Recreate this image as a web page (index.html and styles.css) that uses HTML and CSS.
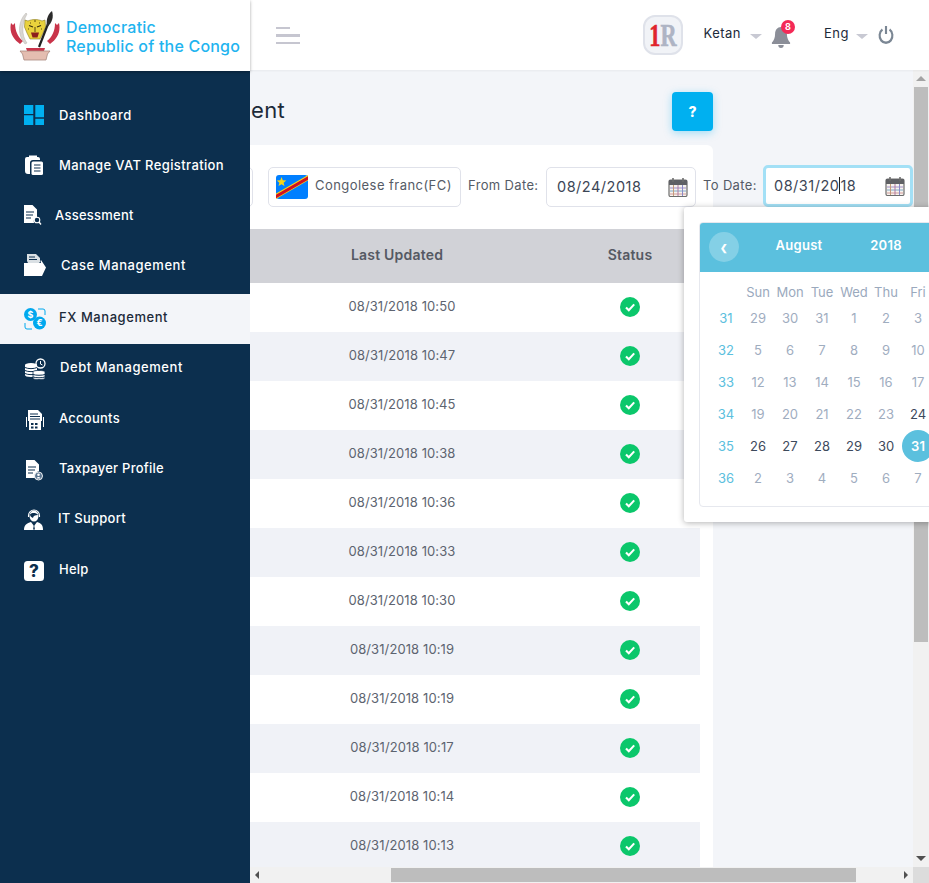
FILE: index.html
```html
<!DOCTYPE html>
<html lang="en">
<head>
<meta charset="utf-8">
<title>FX Management</title>
<link rel="stylesheet" href="styles.css">
</head>
<body>
<svg class="defs" width="0" height="0" aria-hidden="true">
  <symbol id="check" viewBox="0 0 20 20">
    <circle cx="10" cy="10" r="10" fill="#0bc76b"/>
    <path d="M6 10.400l2.800 2.800 5.400-5.800" fill="none" stroke="#fff" stroke-width="2.100"/>
  </symbol>
  <symbol id="cal" viewBox="0 0 20 20">
    <rect x="1" y="3" width="18" height="16.500" rx="1.500" fill="#f7f3ee" stroke="#6d6d6d" stroke-width="1.200"/>
    <rect x="1" y="3" width="18" height="5" fill="#5f6064"/>
    <path d="M5 1v4M15 1v4" stroke="#6d6d6d" stroke-width="1.600"/>
    <path d="M2 11h16" stroke="#a08fc8" stroke-width="1"/>
    <path d="M2 14h16" stroke="#7fa8c8" stroke-width="1"/>
    <path d="M2 17h16" stroke="#d09a9a" stroke-width="1"/>
    <path d="M5.500 8v11" stroke="#c49a7a" stroke-width="1"/>
    <path d="M10 8v11" stroke="#b07aa0" stroke-width="1"/>
    <path d="M14.500 8v11" stroke="#8a8ac8" stroke-width="1"/>
  </symbol>
</svg>
<div class="app">
  <aside class="sidebar">
    <div class="brand">
      <svg class="emblem" viewBox="0 0 50 50" width="50" height="50" aria-hidden="true">
        <path d="M1 12c-2 9 2 16 9 21l3-3C8 26 5 20 5 12L3 14z" fill="#c9344a"/>
        <path d="M49 12c2 9-2 16-9 21l-3-3c5-4 8-10 8-18l2 2z" fill="#c9344a"/>
        <path d="M16 2C8 10 7 24 15 33l2-1C11 24 12 12 17 3z" fill="#d9d6d2" stroke="#a9a6a2" stroke-width=".4"/>
        <path d="M15 9l3 1c4-2 10-2 14 0l3-1 .5 7-2.500 6-3 6h-10l-3-6-2.500-6z" fill="#e9d23c" stroke="#8a7a20" stroke-width=".6"/>
        <path d="M19 14.500l4 1.500M31 14.500l-4 1.500" stroke="#3a3010" stroke-width="1.300"/>
        <path d="M25 16v5M20 12h1M29 12h1M18 18h1M31 18h1M24 10h2" stroke="#5a4a10" stroke-width="1"/>
        <path d="M21 21.500h8l-1.500 5h-5z" fill="#8c1f1c"/>
        <path d="M29 36L38 13" stroke="#222" stroke-width="2.200"/>
        <path d="M42 0c2 6 0 12-5 16-1-6 0-12 5-16z" fill="#2b2b2b"/>
        <path d="M16 37h19l-1 3H17z" fill="#c9344a"/>
        <path d="M10 40h30l-2.500 3-1.500 6H14l-1.500-6z" fill="#e4bdb0" stroke="#a98a80" stroke-width=".8"/>
      </svg>
      <div class="brand-name">Democratic<br>Republic of the Congo</div>
    </div>
    <nav class="nav">
      <a class="nav-item">
        <svg class="nav-icon" viewBox="0 0 22 22" aria-hidden="true"><path fill="#00b0f0" d="M0 1h9.300v9H0zM0 11.300h9.300V21H0zM11.300 1H20v12.300h-8.700zM11.300 14.700H20V21h-8.700z"/></svg>
        <span class="nav-label ls-wide">Dashboard</span>
      </a>
      <a class="nav-item">
        <svg class="nav-icon" viewBox="0 0 22 22" aria-hidden="true"><path fill="#fff" d="M3 3h2V1.500h8V3h1a2 2 0 0 1 2 2v1H9a3 3 0 0 0-3 3v11H4a3 3 0 0 1-3-3V5a2 2 0 0 1 2-2z"/><rect x="7.500" y="7.500" width="11.500" height="13.500" rx="1.500" fill="#fff"/><path d="M10 11h6.500M10 14h6.500M10 17h6.500" stroke="#0d2f4f" stroke-width="1.200"/></svg>
        <span class="nav-label ls-mid">Manage VAT Registration</span>
      </a>
      <a class="nav-item">
        <svg class="nav-icon" viewBox="0 0 22 22" aria-hidden="true"><path fill="#fff" d="M0 1h8.500l4.500 4.500V13a5 5 0 0 0-3 6H0z"/><path d="M2 8h8M2 11h7M2 14h5" stroke="#0d2f4f" stroke-width="1.100"/><circle cx="13" cy="16" r="2.800" fill="none" stroke="#fff" stroke-width="1.100"/><path d="M15 18l2 2.500" stroke="#fff" stroke-width="1.300"/></svg>
        <span class="nav-label nav-label-assess">Assessment</span>
      </a>
      <a class="nav-item">
        <svg class="nav-icon" viewBox="0 0 22 22" aria-hidden="true"><path fill="#fff" d="M3 7V0h9l4 4v4l-1 1H4z" opacity=".85"/><path d="M5 3h6M5 5.500h8" stroke="#0d2f4f" stroke-width="1"/><path fill="#fff" d="M0 9h17l-.5-2 .5-1 5 7.500-4 8.500H0z"/></svg>
        <span class="nav-label nav-label-case ls-wide">Case Management</span>
      </a>
      <div class="nav-lower">
        <a class="nav-item is-active">
          <svg class="nav-icon" viewBox="0 0 22 22" aria-hidden="true"><circle cx="6.500" cy="6.500" r="6.500" fill="#00a8ee"/><circle cx="15.500" cy="15" r="6.500" fill="#00a8ee"/><text x="6.500" y="9.800" class="fx-glyph">$</text><text x="15.500" y="18.300" class="fx-glyph">€</text><path d="M14 1h5a2 2 0 0 1 2 2v4M8 21H3a2 2 0 0 1-2-2v-4" fill="none" stroke="#00a8ee" stroke-width="1"/></svg>
          <span class="nav-label ls-wide">FX Management</span>
        </a>
        <a class="nav-item">
          <svg class="nav-icon" viewBox="0 0 22 22" aria-hidden="true"><path fill="#fff" d="M1 7c0-1 2-2 6-2s6 1 6 2v10c0 1-2 2-6 2s-6-1-6-2z"/><path d="M1 9.500c3 1.500 9 1.500 12 0M1 12.500c3 1.500 9 1.500 12 0M1 15.500c3 1.500 9 1.500 12 0" fill="none" stroke="#0d2f4f" stroke-width="1"/><path fill="#fff" d="M9 14c0-1 2-1.500 6-1.500s6 .5 6 1.500v6c0 1-2 1.500-6 1.500s-6-.5-6-1.500z" stroke="#0d2f4f" stroke-width=".8"/><path d="M9 16.500c3 1 9 1 12 0M9 19c3 1 9 1 12 0" fill="none" stroke="#0d2f4f" stroke-width="1"/><circle cx="16.500" cy="5.500" r="4.500" fill="none" stroke="#fff" stroke-width="1.300"/><path d="M16.500 3v3l2 1" fill="none" stroke="#fff" stroke-width="1"/></svg>
          <span class="nav-label nav-label-debt ls-wide">Debt Management</span>
        </a>
        <a class="nav-item">
          <svg class="nav-icon" viewBox="0 0 22 22" aria-hidden="true"><path fill="#fff" d="M4 1h10l4 4v7H4zM2 8h1v10H2zM19 8h1v10h-1z"/><path d="M6 5h8M6 7.500h10M6 10h10" stroke="#0d2f4f" stroke-width="1"/><rect x="5" y="11.500" width="12" height="9.500" fill="#fff"/><path d="M7 14h2.500v2H7zM11 14h2.500v2H11zM7 17.500h2.500v2H7zM11 17.500h2.500v2H11z" fill="#0d2f4f"/></svg>
          <span class="nav-label">Accounts</span>
        </a>
        <a class="nav-item">
          <svg class="nav-icon" viewBox="0 0 22 22" aria-hidden="true"><path fill="#fff" d="M2 1h8.500L15 5.500V12a5 5 0 0 0-3.500 7H2z"/><path d="M4 8h8M4 11h7M4 14h5" stroke="#0d2f4f" stroke-width="1.100"/><circle cx="14.500" cy="17" r="4" fill="#5a7590" stroke="#fff" stroke-width=".9"/><circle cx="14.500" cy="15.800" r="1.300" fill="#fff"/><path d="M12.500 19.500c.5-2 3.500-2 4 0z" fill="#fff"/></svg>
          <span class="nav-label">Taxpayer Profile</span>
        </a>
        <a class="nav-item">
          <svg class="nav-icon" viewBox="0 0 22 22" aria-hidden="true"><ellipse cx="10" cy="7" rx="4.500" ry="5.500" fill="#fff"/><path d="M4.500 8V6.500a5.500 5.500 0 0 1 11 0V8" fill="none" stroke="#fff" stroke-width="1.100"/><path d="M6 5.500c2-2 6-2 8 .5-3 0-5 1-5 3-2-1-3-2-3-3.500z" fill="#0d2f4f"/><path fill="#fff" d="M0 21c0-5 3-7 7-8l3 4 3-4c4 1 6 3 6 8z"/><path d="M10 15.500l-1 5h2z" fill="#0d2f4f"/></svg>
          <span class="nav-label nav-label-it">IT Support</span>
        </a>
        <a class="nav-item">
          <svg class="nav-icon" viewBox="0 0 22 22" aria-hidden="true"><rect y="1" width="20" height="20" rx="3.500" fill="#fff"/><text x="10" y="17" class="help-glyph">?</text></svg>
          <span class="nav-label">Help</span>
        </a>
      </div>
    </nav>
  </aside>

  <div class="workspace">
    <header class="topbar">
      <div class="menu-toggle"><span class="bar bar-short"></span><span class="bar"></span><span class="bar"></span></div>
      <div class="top-actions">
        <div class="r-logo"><div class="r-mark"><span class="r-one">1</span><span class="r-r">R</span></div></div>
        <span class="user-name">Ketan</span>
        <span class="caret-down"></span>
        <div class="bell">
          <svg viewBox="0 0 22 24" width="20" height="24" preserveAspectRatio="none" aria-hidden="true"><path fill="#8b8e98" d="M11 3c4 0 6.500 3 6.500 7 0 4 1.500 6.500 3.500 8.500V20H1v-1.500C3 16.500 4.500 14 4.500 10c0-4 2.500-7 6.500-7zM8 21h6a3 3 0 0 1-6 0z"/></svg>
          <span class="badge">8</span>
        </div>
        <span class="lang">Eng</span>
        <span class="caret-down caret-lang"></span>
        <svg class="power" viewBox="0 0 18 18" width="16" height="18" preserveAspectRatio="none" aria-hidden="true"><path d="M5 3.600a7.200 7.200 0 1 0 8 0" fill="none" stroke="#7b8794" stroke-width="2.400"/><path d="M9 0v8" stroke="#7b8794" stroke-width="2.400"/></svg>
      </div>
    </header>

    <div class="viewport">
      <div class="v-row">
        <main class="content">
          <div class="page">
            <div class="title-row">
              <h1 class="title">FX Management</h1>
              <button class="help-btn">?</button>
            </div>
            <section class="card">
              <div class="filters">
                <div class="box box-cut"></div>
                <div class="box box-currency">
                  <svg class="flag" viewBox="0 0 32 24" width="32" height="24" aria-hidden="true">
                    <rect width="32" height="24" rx="3" fill="#007fff"/>
                    <path d="M0 18.500L32 0v5.500L0 24z" fill="#f7d618"/>
                    <path d="M0 20.500L32 2v1.800L0 22.500z" fill="#ce1021" stroke="#ce1021" stroke-width="1.500"/>
                    <path d="M5.500 2l1.300 3.300 3.500.2-2.700 2.200.9 3.400-3-1.900-3 1.900.9-3.400L.8 5.500l3.500-.2z" fill="#f7d618"/>
                  </svg>
                  <span class="lift">Congolese franc(FC)</span>
                </div>
                <label class="field-label lift">From Date:</label>
                <div class="box box-date">
                  <span class="lift-small">08/24/2018</span>
                  <svg class="cal-icon" width="20" height="20" aria-hidden="true"><use href="#cal"/></svg>
                </div>
                <label class="field-label field-label-to lift">To Date:</label>
                <div class="box box-date is-focus">
                  <span class="lift-small">08/31/20<span class="text-caret">18</span></span>
                  <svg class="cal-icon" width="20" height="20" aria-hidden="true"><use href="#cal"/></svg>
                </div>
              </div>
              <table class="grid">
                <thead><tr><th>Last Updated</th><th>Status</th></tr></thead>
                <tbody>
                  <tr><td>08/31/2018 10:50</td><td><svg class="ok" width="20" height="20"><use href="#check"/></svg></td></tr>
                  <tr><td>08/31/2018 10:47</td><td><svg class="ok" width="20" height="20"><use href="#check"/></svg></td></tr>
                  <tr><td>08/31/2018 10:45</td><td><svg class="ok" width="20" height="20"><use href="#check"/></svg></td></tr>
                  <tr><td>08/31/2018 10:38</td><td><svg class="ok" width="20" height="20"><use href="#check"/></svg></td></tr>
                  <tr><td>08/31/2018 10:36</td><td><svg class="ok" width="20" height="20"><use href="#check"/></svg></td></tr>
                  <tr><td>08/31/2018 10:33</td><td><svg class="ok" width="20" height="20"><use href="#check"/></svg></td></tr>
                  <tr><td>08/31/2018 10:30</td><td><svg class="ok" width="20" height="20"><use href="#check"/></svg></td></tr>
                  <tr><td>08/31/2018 10:19</td><td><svg class="ok" width="20" height="20"><use href="#check"/></svg></td></tr>
                  <tr><td>08/31/2018 10:19</td><td><svg class="ok" width="20" height="20"><use href="#check"/></svg></td></tr>
                  <tr><td>08/31/2018 10:17</td><td><svg class="ok" width="20" height="20"><use href="#check"/></svg></td></tr>
                  <tr><td>08/31/2018 10:14</td><td><svg class="ok" width="20" height="20"><use href="#check"/></svg></td></tr>
                  <tr><td>08/31/2018 10:13</td><td><svg class="ok" width="20" height="20"><use href="#check"/></svg></td></tr>
                </tbody>
              </table>
            </section>
          </div>
        </main>
        <div class="vscroll">
          <span class="arrow arrow-up"></span>
          <span class="vthumb"></span>
          <span class="arrow arrow-down"></span>
        </div>
      </div>
      <div class="h-row">
        <div class="hscroll">
          <span class="arrow arrow-left"></span>
          <span class="hthumb"></span>
          <span class="arrow arrow-right"></span>
        </div>
        <div class="corner"></div>
      </div>
    </div>
  </div>

  <div class="datepicker">
    <div class="dp-inner">
      <div class="dp-head">
        <span class="dp-prev">❮</span>
        <span class="dp-month">August</span>
        <span class="dp-year">2018</span>
      </div>
      <div class="dp-grid">
        <span></span><span class="dow">Sun</span><span class="dow">Mon</span><span class="dow">Tue</span><span class="dow">Wed</span><span class="dow">Thu</span><span class="dow">Fri</span><span class="dow">Sat</span>
        <span class="wk">31</span><span>29</span><span>30</span><span>31</span><span>1</span><span>2</span><span>3</span><span>4</span>
        <span class="wk">32</span><span>5</span><span>6</span><span>7</span><span>8</span><span>9</span><span>10</span><span>11</span>
        <span class="wk">33</span><span>12</span><span>13</span><span>14</span><span>15</span><span>16</span><span>17</span><span>18</span>
        <span class="wk">34</span><span>19</span><span>20</span><span>21</span><span>22</span><span>23</span><span class="on">24</span><span class="on">25</span>
        <span class="wk">35</span><span class="on">26</span><span class="on">27</span><span class="on">28</span><span class="on">29</span><span class="on">30</span><span class="sel">31</span><span>1</span>
        <span class="wk">36</span><span>2</span><span>3</span><span>4</span><span>5</span><span>6</span><span>7</span><span>8</span>
      </div>
    </div>
  </div>
</div>
</body>
</html>
```
FILE: styles.css
```css
* { box-sizing: border-box; }
html, body { margin: 0; padding: 0; height: 100%; overflow: hidden; }
body { font-family: Inter, "Noto Sans", sans-serif; color: #1c2a3a; background: #fff; }
.defs { position: absolute; }
.app { position: relative; display: flex; width: 929px; height: 883px; overflow: hidden; }

/* Sidebar */
.sidebar { position: relative; z-index: 2; width: 250px; flex: none; background: #0c2f4e; display: flex; flex-direction: column; }
.brand { height: 71px; background: #fff; display: flex; align-items: center; padding: 0 0 0 10px; gap: 6px; box-shadow: 0 1px 3px rgba(0,0,0,.35); }
.emblem { flex: none; }
.brand-name { font-size: 16px; line-height: 19px; font-weight: 500; color: #1fb4ef; white-space: nowrap; letter-spacing: .2px; padding-top: 3px; }
.nav { padding-top: 19px; display: flex; flex-direction: column; }
.nav-item { display: flex; align-items: center; height: 50px; padding-left: 24px; color: #fff; }
.nav-icon { width: 22px; height: 22px; flex: none; }
.nav-label { margin-left: 13px; font-size: 13px; font-weight: 500; letter-spacing: .25px; white-space: nowrap; }
.ls-wide { letter-spacing: .56px; }
.ls-mid { letter-spacing: .38px; }
.nav-label-assess { margin-left: 9px; }
.nav-label-case { margin-left: 15px; }
.nav-label-debt { margin-left: 14px; }
.nav-label-it { margin-left: 12px; }
.nav-lower { padding-top: 4px; }
.nav-lower .nav-item { height: 50.300px; padding-bottom: 4px; }
.nav-lower .nav-icon { margin-top: 4px; }
.is-active { background: #f3f5f9; color: #1c2a3a; }
.fx-glyph { font-size: 9px; font-weight: 700; fill: #fff; text-anchor: middle; }
.help-glyph { font-size: 17px; font-weight: 800; fill: #0c2f4e; text-anchor: middle; }

/* Top bar */
.workspace { flex: 1; min-width: 0; display: flex; flex-direction: column; }
.topbar { height: 70px; flex: none; background: #fff; display: flex; align-items: center; justify-content: space-between; box-shadow: 0 1px 2px rgba(0,0,0,.05); position: relative; z-index: 1; }
.menu-toggle { margin-left: 26px; margin-top: 1px; width: 24px; display: flex; flex-direction: column; gap: 5px; }
.bar { display: block; height: 2.500px; background: #c6c6d0; }
.bar-short { width: 14px; }
.top-actions { display: flex; align-items: center; padding-right: 35px; }
.r-logo { width: 40px; height: 40px; border: 2px solid #dfe2ea; border-radius: 12px; background: #f1f3f7; display: flex; align-items: center; justify-content: center; overflow: hidden; }
.r-mark { display: flex; transform: scaleX(.72); font-family: "Liberation Serif", serif; font-weight: 700; font-size: 31px; line-height: 1; -webkit-text-stroke: .6px currentColor; }
.r-one { color: #e0242d; }
.r-r { color: #aeb4c4; }
.user-name, .lang { font-size: 13px; color: #1c2a3a; letter-spacing: .5px; position: relative; top: -2px; }
.user-name { margin-left: 20px; }
.caret-down { width: 0; height: 0; border-left: 6px solid transparent; border-right: 6px solid transparent; border-top: 5.500px solid #c8c9d3; margin-left: 9px; margin-top: 2px; }
.bell { position: relative; width: 20px; height: 24px; margin-left: 9px; margin-top: 2px; }
.bell svg { display: block; }
.badge { position: absolute; top: -4px; left: 10px; width: 14px; height: 14px; border-radius: 50%; background: #f42a57; color: #fff; font-size: 9px; font-weight: 700; line-height: 14px; text-align: center; }
.lang { margin-left: 33px; }
.caret-lang { margin-left: 7px; }
.power { margin-left: 10px; }

/* Viewport with faux scrollbars */
.viewport { flex: 1; min-height: 0; display: flex; flex-direction: column; }
.v-row { flex: 1; min-height: 0; display: flex; }
.content { flex: 1; min-width: 0; overflow: hidden; background: #f3f5f9; }
.page { width: 479px; margin-left: -16px; }
.title-row { height: 75px; display: flex; align-items: flex-start; justify-content: flex-end; position: relative; }
.title { margin: 27px 0 0 0; font-size: 22px; line-height: 26px; font-weight: 400; color: #1c2a3a; letter-spacing: .3px; white-space: nowrap; position: absolute; right: 428px; }
.help-btn { margin-top: 22px; width: 41px; height: 39px; border: 0; border-radius: 4px; background: #00b0f0; color: #fff; font: 800 14px Inter, sans-serif; box-shadow: 0 2px 8px rgba(0,176,240,.35); }
.card { background: #fff; border-radius: 0 6px 0 0; padding: 22px 13px 0 0; }
.filters { display: flex; align-items: center; height: 40px; white-space: nowrap; }
.box { height: 40px; border: 1px solid #e0e2ea; border-radius: 5px; background: #fff; display: flex; align-items: center; flex: none; }
.box-cut { width: 19px; }
.box-currency { width: 193px; margin-left: 15px; padding-left: 7px; gap: 7px; font-size: 13px; color: #555b66; letter-spacing: .45px; }
.flag { flex: none; }
.lift { padding-bottom: 4px; }
.lift-small { padding-bottom: 2px; }
.field-label { margin-left: 7px; font-size: 13px; color: #555b66; letter-spacing: .35px; width: 71px; flex: none; }
.field-label-to { width: 53px; }
.box-date { width: 150px; margin-left: 7px; padding: 0 7px 0 10px; justify-content: space-between; font-size: 14.500px; color: #3c4656; letter-spacing: .5px; }
.is-focus { border: 3px solid #a3e0f6; margin-top: -2px; height: 42px; padding: 0 5px 0 8px; }
.text-caret { border-left: 1px solid #222; }
.cal-icon { flex: none; }

.grid { width: 466px; border-collapse: collapse; table-layout: fixed; margin-top: 22px; }
.grid th:first-child, .grid td:first-child { width: 326px; }
.grid th { height: 54px; background: #d1d2d7; font-size: 14px; font-weight: 600; color: #555963; letter-spacing: .2px; padding: 0 0 4px; }
.grid td { height: 49px; padding: 0 0 3px 10px; text-align: center; font-size: 13px; color: #5d6470; letter-spacing: .1px; }
.grid td:last-child { padding: 0 0 2px; }
.grid tbody tr:nth-child(even) { background: #f0f2f7; }
.ok { display: block; margin: 0 auto; }

.vscroll { width: 16px; flex: none; background: #f1f1f1; position: relative; display: flex; flex-direction: column; align-items: center; }
.vthumb { position: absolute; top: 17px; left: 1px; width: 14px; height: 555px; background: #bdbdbd; }
.h-row { height: 16px; flex: none; display: flex; }
.hscroll { flex: 1; background: #f1f1f1; position: relative; }
.hthumb { position: absolute; top: 1px; left: 141px; width: 465px; height: 14px; background: #bdbdbd; }
.corner { width: 16px; background: #dcdcdc; }
.arrow { position: absolute; width: 0; height: 0; border: 4px solid transparent; }
.arrow-up { left: 3px; top: 6px; border-width: 0 5px 5px; border-bottom-color: #a3a3a3; }
.arrow-down { bottom: 6px; left: 3px; border-width: 5px 5px 0; border-top-color: #505050; }
.arrow-left { left: 5px; top: 4px; border-width: 4px 4px 4px 0; border-right-color: #505050; }
.arrow-right { right: 5px; top: 4px; border-width: 4px 0 4px 4px; border-left-color: #505050; }

/* Date picker overlay */
.datepicker { position: absolute; z-index: 3; left: 684px; top: 207px; width: 308px; height: 315px; background: #fff; padding: 15px; box-shadow: 0 1px 6px rgba(0,0,0,.3); border-radius: 3px; }
.dp-inner { height: 285px; border: 1px solid #e6e8ee; border-radius: 4px; overflow: hidden; }
.dp-head { height: 50px; background: #5bc0de; color: #fff; display: flex; align-items: center; font-size: 13px; font-weight: 600; letter-spacing: .3px; margin: -1px -1px 0; padding-left: 10px; }
.dp-prev { width: 30px; height: 30px; border-radius: 50%; background: rgba(255,255,255,.25); display: flex; align-items: center; justify-content: center; font-size: 9px; }
.dp-month { width: 60px; margin: -4px 0 0 30px; text-align: center; }
.dp-year { width: 40px; margin: -4px 0 0 37px; text-align: center; }
.dp-grid { display: grid; grid-template-columns: repeat(8, 32px); grid-template-rows: 20px repeat(6, 32px); margin: 10px 0 0 10px; font-size: 13px; color: #9fadbf; }
.dp-grid span { display: flex; align-items: center; justify-content: center; }
.dow { color: #9aa9bd; }
.wk { color: #5bc0de; }
.on { color: #3d4a5c; }
.sel { background: #5bc0de; color: #fff; border-radius: 50%; font-weight: 600; }
```
